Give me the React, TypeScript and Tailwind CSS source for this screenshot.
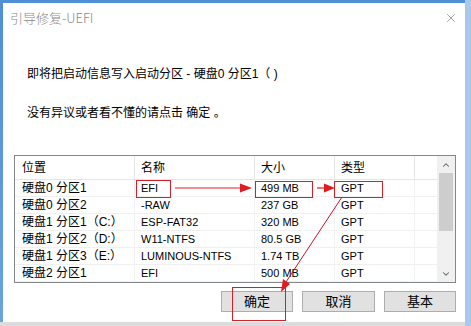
import { X, ChevronUp, ChevronDown } from 'lucide-react'

const rows = [
  { pos: '硬盘0 分区1', name: 'EFI', size: '499 MB', type: 'GPT' },
  { pos: '硬盘0 分区2', name: '-RAW', size: '237 GB', type: 'GPT' },
  { pos: '硬盘1 分区1（C:）', name: 'ESP-FAT32', size: '320 MB', type: 'GPT' },
  { pos: '硬盘1 分区2（D:）', name: 'W11-NTFS', size: '80.5 GB', type: 'GPT' },
  { pos: '硬盘1 分区3（E:）', name: 'LUMINOUS-NTFS', size: '1.74 TB', type: 'GPT' },
  { pos: '硬盘2 分区1', name: 'EFI', size: '500 MB', type: 'GPT' },
]

const cjk = "font-['Liberation_Sans','Noto_Sans_CJK_SC',sans-serif]"

export default function App() {
  return (
    <div className={`relative w-[471px] h-[326px] overflow-hidden bg-gradient-to-b from-[#4f8fd6] to-[#6aa3de] ${cjk}`}>
      <div className="absolute inset-y-0 right-0 w-[6px] bg-[#a9c9ec]" />

      {/* Dialog body */}
      <div className="relative ml-[3px] mt-[3px] w-[462px] h-[319px] bg-white flex flex-col">
        {/* Title */}
        <div className="h-[30px] flex items-center justify-between pl-[7px] pr-[7px]">
          <span className="text-[13px] text-[#8a8a8a] font-['Noto_Sans_CJK_SC',sans-serif] font-light">引导修复-UEFI</span>
          <X className="w-[14px] h-[14px] text-[#7a7a7a]" strokeWidth={1.2} />
        </div>

        <p className="mt-[33px] ml-[24px] h-[16px] leading-[16px] text-[12px] text-black">
          即将把启动信息写入启动分区 - 硬盘0 分区1（ )
        </p>
        <p className="mt-[23px] ml-[24px] h-[16px] leading-[16px] text-[12px] text-black">
          没有异议或者看不懂的请点击 确定 。
        </p>

        {/* Partition list */}
        <div className="mt-[34px] ml-[11px] w-[442px] h-[128px] border border-[#828790] flex">
          <div className="flex-1 flex flex-col">
            <div className="h-[25px] flex border-b border-[#e5e5e5] text-[12px] text-black">
              <div className="w-[120px] border-r border-[#e5e5e5] pl-[7px] flex items-center">位置</div>
              <div className="w-[120px] border-r border-[#e5e5e5] pl-[6px] flex items-center">名称</div>
              <div className="w-[80px] border-r border-[#e5e5e5] pl-[6px] flex items-center">大小</div>
              <div className="w-[80px] border-r border-[#e5e5e5] pl-[6px] flex items-center">类型</div>
            </div>
            {rows.map((r, i) => (
              <div key={i} className="h-[17px] flex border-b border-[#f0f0f0] text-black leading-[17px]">
                <div className="w-[120px] border-r border-[#f0f0f0] pl-[7px] whitespace-nowrap text-[12px]">{r.pos}</div>
                <div className="w-[120px] border-r border-[#f0f0f0] pl-[6px] whitespace-nowrap text-[11px]">{r.name}</div>
                <div className="w-[80px] border-r border-[#f0f0f0] pl-[6px] whitespace-nowrap text-[11px]">{r.size}</div>
                <div className="w-[80px] border-r border-[#f0f0f0] pl-[6px] whitespace-nowrap text-[11px]">{r.type}</div>
              </div>
            ))}
          </div>
          {/* Scrollbar */}
          <div className="w-[18px] bg-[#f0f0f0] flex flex-col items-center">
            <div className="h-[17px] flex items-center justify-center">
              <ChevronUp className="w-[10px] h-[10px] text-[#606060]" strokeWidth={2.5} />
            </div>
            <div className="w-[14px] h-[58px] bg-[#cdcdcd]" />
            <div className="flex-1" />
            <div className="h-[17px] flex items-center justify-center">
              <ChevronDown className="w-[10px] h-[10px] text-[#606060]" strokeWidth={2.5} />
            </div>
          </div>
        </div>

        {/* Buttons */}
        <div className="mt-[8px] pr-[9px] flex justify-end gap-[9px]">
          <button className="w-[72px] h-[21px] bg-[#e1e1e1] border border-[#adadad] text-[13px] text-black">确定</button>
          <button className="w-[73px] h-[21px] bg-[#e1e1e1] border border-[#adadad] text-[13px] text-black">取消</button>
          <button className="w-[72px] h-[21px] bg-[#e1e1e1] border border-[#adadad] text-[13px] text-black">基本</button>
        </div>
      </div>
      <div className="h-[4px] bg-[#dcdcdc]" />

      {/* Red annotations */}
      <div className="absolute left-[136px] top-[180px] w-[35px] h-[18px] border border-[#d4202a]" />
      <div className="absolute left-[255px] top-[181px] w-[58px] h-[17px] border border-[#d4202a]" />
      <div className="absolute left-[334px] top-[181px] w-[49px] h-[17px] border border-[#d4202a]" />
      <div className="absolute left-[232px] top-[287px] w-[54px] h-[34px] border border-[#d4202a]" />
      <svg className="absolute left-0 top-0" width="471" height="326" viewBox="0 0 471 326">
        <line x1="175" y1="188" x2="242" y2="188" stroke="#e01b22" strokeWidth="1.2" />
        <polygon points="240,183.5 252,188 240,192.5" fill="#e01b22" />
        <line x1="317" y1="188" x2="326" y2="188" stroke="#e01b22" strokeWidth="1.2" />
        <polygon points="324,183.5 335,188 324,192.5" fill="#e01b22" />
        <line x1="342" y1="197" x2="286" y2="282" stroke="#c8102e" strokeWidth="1" />
        <polygon points="281,292 283,279 290,284" fill="#e01b22" />
      </svg>
    </div>
  )
}
